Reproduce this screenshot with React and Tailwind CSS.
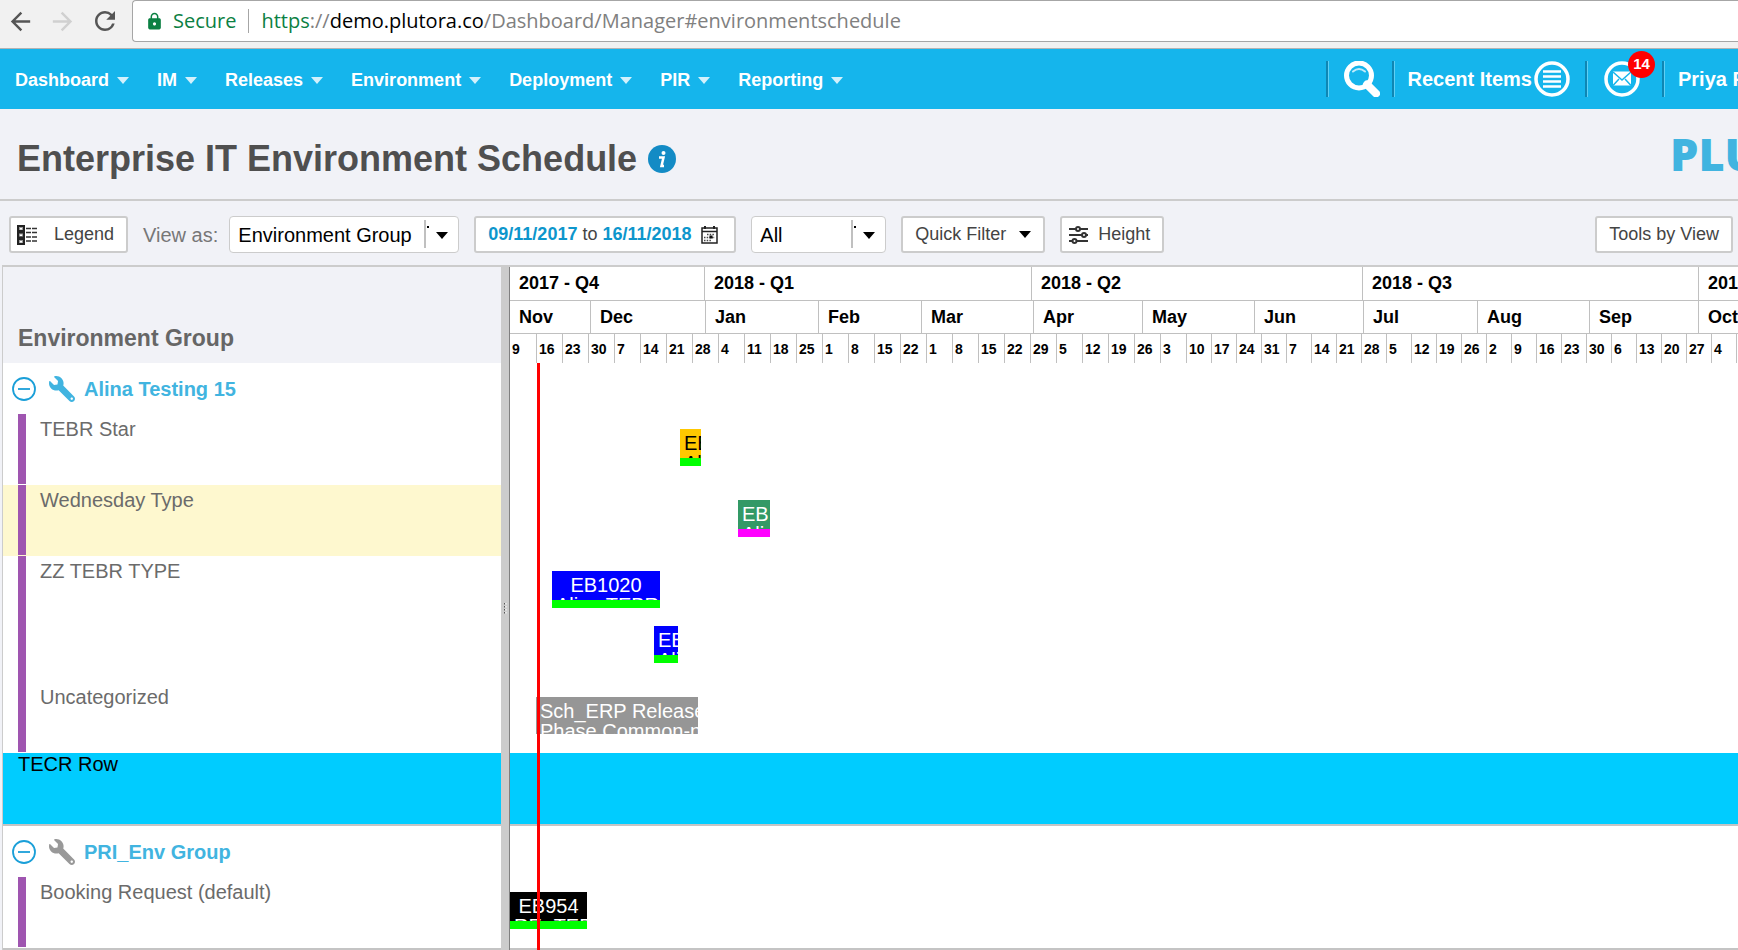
import React from "react";
import { FaWrench } from "react-icons/fa";
import { MdArrowBack, MdArrowForward, MdRefresh, MdLock } from "react-icons/md";

const MENU = ["Dashboard", "IM", "Releases", "Environment", "Deployment", "PIR", "Reporting"];

const QUARTERS = [
  ["2017 - Q4", 195],
  ["2018 - Q1", 327],
  ["2018 - Q2", 331],
  ["2018 - Q3", 336],
  ["2018 - Q4", 336],
];

const MONTHS = [
  ["Nov", 81],
  ["Dec", 115],
  ["Jan", 113],
  ["Feb", 103],
  ["Mar", 112],
  ["Apr", 109],
  ["May", 112],
  ["Jun", 109],
  ["Jul", 114],
  ["Aug", 112],
  ["Sep", 109],
  ["Oct", 112],
];

const WEEKS = [
  9, 16, 23, 30, 7, 14, 21, 28, 4, 11, 18, 25, 1, 8, 15, 22, 1, 8, 15, 22, 29, 5, 12, 19, 26, 3,
  10, 17, 24, 31, 7, 14, 21, 28, 5, 12, 19, 26, 2, 9, 16, 23, 30, 6, 13, 20, 27, 4,
];
const weekWidth = (i) => (i === 0 ? 27 : i <= 25 ? 26 : 25);

const ROWS = [
  { kind: "group", name: "Alina Testing 15", wrench: "text-[#41b4e0]" },
  {
    kind: "item",
    name: "TEBR Star",
    bars: [{ left: 170, width: 21, top: 15, title: "EB", sub: "Alina", box: "bg-[#ffc800] text-black", strip: "bg-[#00ff00]" }],
  },
  {
    kind: "item",
    name: "Wednesday Type",
    highlight: true,
    bars: [{ left: 228, width: 32, top: 15, title: "EB", sub: "Alina", box: "bg-[#339966] text-white", strip: "bg-[#ff00ff]" }],
  },
  {
    kind: "item",
    name: "ZZ TEBR TYPE",
    tall: true,
    bars: [
      { left: 42, width: 108, top: 15, title: "EB1020", sub: "Alina TEBR", box: "bg-[#0000ff] text-white", strip: "bg-[#00ff00]" },
      { left: 144, width: 24, top: 70, title: "EB", sub: "Alina", box: "bg-[#0000ff] text-white", strip: "bg-[#00ff00]" },
    ],
  },
  {
    kind: "item",
    name: "Uncategorized",
    bars: [{ left: 26, width: 162, top: 15, title: "Sch_ERP Release", sub: "Phase Common-n", box: "bg-[#969696] text-white" }],
  },
  { kind: "tecr", name: "TECR Row" },
  { kind: "group", name: "PRI_Env Group", wrench: "text-[#999999]" },
  {
    kind: "item",
    name: "Booking Request (default)",
    last: true,
    bars: [{ left: 0, width: 77, top: 15, title: "EB954", sub: "RE- TEBR", box: "bg-black text-white", strip: "bg-[#00ff00]" }],
  },
];

function rowHeight(row) {
  if (row.kind === "group") return "h-[51px]";
  if (row.kind === "tecr") return "h-[73px] border-b-2 border-[#c4c4c4] bg-[#00ccff]";
  if (row.tall) return "h-[126px]";
  if (row.last) return "h-[73px] border-b-2 border-[#c4c4c4]";
  return "h-[71px]";
}

function Caret({ className }) {
  return (
    <svg viewBox="0 0 12 7" className={`h-[7px] w-3 shrink-0 ${className}`} aria-hidden="true">
      <path d="M0 0h12L6 7z" fill="currentColor" />
    </svg>
  );
}

function BrowserBar() {
  return (
    <div className="flex h-[49px] items-start border-b border-[#b3b3b3] bg-[#f1f1f1] pl-[6px]">
      <div className="flex h-[42px] w-[126px] shrink-0 items-center gap-[13px]">
        <button type="button" aria-label="Back" className="text-[#555555]"><MdArrowBack size={29} /></button>
        <button type="button" aria-label="Forward" className="text-[#d0d0d0]"><MdArrowForward size={29} /></button>
        <button type="button" aria-label="Reload" className="text-[#555555]"><MdRefresh size={30} /></button>
      </div>
      <div className="flex h-[42px] flex-1 items-center rounded-l border border-r-0 border-[#a6a6a6] bg-white pl-3 font-['Open_Sans',sans-serif] text-[20px] whitespace-nowrap">
        <MdLock size={19} className="mr-[9px] text-[#0b8043]" />
        <span className="text-[#0b8043]">Secure</span>
        <span className="mx-3 h-6 w-px bg-[#a6a6a6]" />
        <span className="text-[#808080]">
          <span className="text-[#0b8043]">https</span>://<span className="text-black">demo.plutora.co</span>
          /Dashboard/Manager#environmentschedule
        </span>
      </div>
    </div>
  );
}

function Divider() {
  return <span className="h-9 w-[3px] shrink-0 border-r border-l-2 border-r-[#5fd0f5] border-l-[#0f86b3]" />;
}

function NavBar() {
  return (
    <nav className="flex h-[60px] items-center bg-[#15b5ec] pl-[15px] font-bold text-white">
      <ul className="flex items-center gap-7 pt-[2px] text-[18px]">
        {MENU.map((item) => (
          <li key={item}>
            <button type="button" className="flex items-center gap-2 font-bold">
              {item}
              <Caret className="text-[#d3f1fc]" />
            </button>
          </li>
        ))}
      </ul>
      <div className="ml-auto flex shrink-0 items-center text-[20px]">
        <Divider />
        <button type="button" aria-label="Search" className="mr-3 ml-[14px]">
          <svg viewBox="0 0 37 36" className="h-9 w-[37px]">
            <path d="M24 23.500l9 9" stroke="#fff" strokeWidth="8" strokeLinecap="round" />
            <circle cx="16" cy="14.500" r="12.500" fill="none" stroke="#fff" strokeWidth="5" />
            <path d="M10 10.500q6-5 12 0" fill="none" stroke="#bfeafa" strokeWidth="2" strokeLinecap="round" />
          </svg>
        </button>
        <Divider />
        <button type="button" className="mr-[15px] ml-[13px] flex items-center gap-[2px] font-bold">
          Recent Items
          <svg viewBox="0 0 36 36" className="size-9">
            <circle cx="18" cy="18" r="16" fill="none" stroke="#fff" strokeWidth="3.500" />
            <path d="M9 10.500h18M9 15.500h18M9 20.500h18M9 25.500h18" stroke="#fff" strokeWidth="2.500" />
          </svg>
        </button>
        <Divider />
        <button type="button" aria-label="Messages" className="relative mr-[22px] ml-4">
          <svg viewBox="0 0 36 36" className="size-9">
            <circle cx="18" cy="18" r="16" fill="none" stroke="#fff" strokeWidth="3.500" />
            <rect x="9" y="10.500" width="18" height="14" fill="#fff" />
            <path d="M9 11l9 8 9-8M9 24.500l6-6.500M27 24.500l-6-6.500" fill="none" stroke="#15b5ec" strokeWidth="1.500" />
          </svg>
          <span className="absolute -top-[10px] left-6 flex size-[27px] items-center justify-center rounded-full bg-[#ff0000] text-[15px]">14</span>
        </button>
        <Divider />
        <button type="button" className="ml-[13px] w-[60px] overflow-hidden text-left font-bold whitespace-nowrap">Priya R</button>
      </div>
    </nav>
  );
}

function TitleBar() {
  return (
    <header className="flex h-[92px] items-center border-b-2 border-[#cccccc] pl-[17px]">
      <div className="flex items-center gap-[11px] pt-[10px]">
        <h1 className="text-[36px] font-bold text-[#4f4f4f]">Enterprise IT Environment Schedule</h1>
        <button type="button" aria-label="Information">
          <svg viewBox="0 0 28 28" className="size-7">
            <circle cx="14" cy="14" r="14" fill="#138bc5" />
            <circle cx="15.500" cy="8" r="2" fill="#fff" />
            <path d="M11 12.500h4.500l-2 8.500h2.500" fill="none" stroke="#fff" strokeWidth="2.500" />
          </svg>
        </button>
      </div>
      <div className="ml-auto w-[68px] overflow-hidden font-['Open_Sans',sans-serif] text-[45px] leading-[60px] font-extrabold whitespace-nowrap text-[#41b4e0]">PLUTORA</div>
    </header>
  );
}

function Picker({ id, label, value, className }) {
  return (
    <div className={`relative h-[37px] ${className}`}>
      <select id={id} aria-label={label} className="size-full appearance-none rounded-sm border border-[#cccccc] bg-white pl-2 text-[20px] text-black">
        <option>{value}</option>
      </select>
      <svg viewBox="0 0 24 28" className="pointer-events-none absolute top-1 right-[11px] h-7 w-6" aria-hidden="true">
        <path d="M1 0v28" stroke="#c0c0c0" strokeWidth="2" />
        <path d="M3 6h2v2H3z" fill="#000" />
        <path d="M12 12h12l-6 7z" fill="#000" />
      </svg>
    </div>
  );
}

const BUTTON = "flex h-[37px] items-center rounded-[3px] border-2 border-[#cccccc] bg-white text-[18px] text-[#444444] whitespace-nowrap";

function Toolbar() {
  return (
    <div className="flex h-16 items-start gap-[15px] pt-[15px] pr-[5px] pl-[9px]">
      <button type="button" className={`${BUTTON} gap-[17px] pr-3 pl-[6px]`}>
        <svg viewBox="0 0 20 20" className="size-5">
          <path d="M0 0h8v20H0z" fill="#222" />
          <path d="M2 2h4v3H2zM2 8.500h4v3H2zM2 15h4v3H2z" fill="#999" />
          <path d="M3 3h2v1.500H3zM3 9.500h2V11H3zM3 16h2v1.500H3z" fill="#fff" />
          <path d="M9 3.500h11M9 7.500h11M9 12h11M9 16h11" stroke="#333" strokeWidth="1.500" strokeDasharray="5 1" />
        </svg>
        Legend
      </button>
      <div className="flex items-center gap-[11px]">
        <label htmlFor="view-as" className="text-[20px] text-[#777777]">View as:</label>
        <Picker id="view-as" value="Environment Group" className="w-[230px]" />
      </div>
      <button type="button" className={`${BUTTON} w-[262px] gap-[5px] px-3`}>
        <span className="font-bold text-[#0d96cc]">09/11/2017</span>
        to
        <span className="font-bold text-[#0d96cc]">16/11/2018</span>
        <svg viewBox="0 0 17 18" className="ml-1 h-[18px] w-[17px]">
          <path d="M1 2h15v15H1z" fill="#fff" stroke="#222" strokeWidth="1.500" />
          <path d="M1 5.500h15" stroke="#222" strokeWidth="1.500" />
          <path d="M4 0v3M13 0v3" stroke="#222" strokeWidth="2" />
          <path d="M6 8.500h8M3 11.500h11M3 14.500h8" stroke="#444" strokeWidth="1.500" strokeDasharray="1.500 1.200" />
          <path d="M8.500 9.500h3v3h-3z" fill="#111" />
        </svg>
      </button>
      <Picker id="scope" label="Scope" value="All" className="w-[135px]" />
      <button type="button" className={`${BUTTON} gap-[13px] px-3`}>
        Quick Filter
        <Caret className="text-black" />
      </button>
      <button type="button" className={`${BUTTON} gap-[10px] pr-3 pl-[7px]`}>
        <svg viewBox="0 0 19 18" className="h-[18px] w-[19px]" fill="#fff" stroke="#333" strokeWidth="2">
          <path d="M0 3h19M0 9h19M0 15h19" />
          <circle cx="9" cy="3" r="2" />
          <circle cx="15" cy="9" r="2" />
          <circle cx="5.500" cy="15" r="2" />
        </svg>
        Height
      </button>
      <button type="button" className={`${BUTTON} ml-auto px-3`}>Tools by View</button>
    </div>
  );
}

function RowLabel({ row }) {
  if (row.kind === "group") {
    return (
      <div className={`flex items-center pl-[9px] ${rowHeight(row)}`}>
        <button type="button" aria-label={`Collapse ${row.name}`}>
          <svg viewBox="0 0 24 24" className="size-6" fill="none" stroke="#1a9fd8" strokeWidth="1.800">
            <circle cx="12" cy="12" r="11" />
            <path d="M6 12h12" />
          </svg>
        </button>
        <FaWrench size={26} className={`mr-[9px] ml-[13px] -scale-x-100 ${row.wrench}`} />
        <a href="#group" className="text-[20px] font-bold text-[#41b4e0]">{row.name}</a>
      </div>
    );
  }
  if (row.kind === "tecr") {
    return <div className={`pl-[15px] text-[20px] leading-[22px] text-black ${rowHeight(row)}`}>{row.name}</div>;
  }
  return (
    <div className={`flex pl-[15px] ${rowHeight(row)} ${row.highlight ? "bg-[#fef8cf]" : ""}`}>
      <span className={`w-2 shrink-0 bg-[#9f55b0] ${row.tall ? "" : "mb-px"}`} />
      <span className="pt-1 pl-[14px] text-[20px] leading-[22px] text-[#6b6b6b]">{row.name}</span>
    </div>
  );
}

function Bar({ bar }) {
  return (
    <div
      className={`absolute flex h-[37px] flex-col overflow-hidden text-center text-[20px] leading-5 whitespace-nowrap ${bar.box}`}
      style={{ left: bar.left, width: bar.width, top: bar.top }}
    >
      <div className="min-h-0 flex-1 overflow-hidden px-1 pt-1">
        <div>{bar.title}</div>
        <div>{bar.sub}</div>
      </div>
      {bar.strip && <div className={`h-2 shrink-0 ${bar.strip}`} />}
    </div>
  );
}

function Schedule() {
  return (
    <main className="ml-[2px] flex border-t-2 border-l border-[#cccccc] bg-white">
      <section className="w-[498px] shrink-0">
        <h2 className="flex h-24 items-end bg-[#f1f2f7] pb-2 pl-[15px] text-[23px] leading-[34px] font-bold text-[#666666]">Environment Group</h2>
        {ROWS.map((row) => (
          <RowLabel key={row.name} row={row} />
        ))}
      </section>
      <div className="flex w-[9px] shrink-0 items-center border-r border-[#808080] bg-[#cccccc]">
        <svg viewBox="0 0 8 12" className="h-3 w-2" aria-hidden="true">
          <path d="M3.500 0v12" stroke="#555" strokeWidth="1" strokeDasharray="1.500 1.500" />
          <path d="M5 0v12" stroke="#fff" strokeWidth="1" strokeDasharray="1.500 1.500" />
        </svg>
      </div>
      <section className="min-w-0 flex-1 overflow-hidden">
        <div className="flex h-[34px] border-b border-[#c0c0c0] text-[18px] font-bold text-black">
          {QUARTERS.map(([name, width]) => (
            <div key={name} className="flex shrink-0 items-center border-r border-[#c0c0c0] pl-[9px]" style={{ width }}>{name}</div>
          ))}
        </div>
        <div className="flex h-[33px] border-b border-[#c0c0c0] text-[18px] font-bold text-black">
          {MONTHS.map(([name, width]) => (
            <div key={name} className="flex shrink-0 items-center border-r border-[#c0c0c0] pl-[9px]" style={{ width }}>{name}</div>
          ))}
        </div>
        <div className="flex h-[29px] text-[14px] font-bold text-black">
          {WEEKS.map((day, i) => (
            <div key={i} className="flex shrink-0 items-center border-r border-[#c0c0c0] pt-[2px] pl-[2px]" style={{ width: weekWidth(i) }}>{day}</div>
          ))}
        </div>
        <div className="relative">
          {ROWS.map((row) => (
            <div key={row.name} className={`relative ${rowHeight(row)}`}>
              {(row.bars || []).map((bar) => (
                <Bar key={bar.left} bar={bar} />
              ))}
            </div>
          ))}
          <span className="absolute top-0 bottom-0 left-[27px] w-[3px] bg-[#ff0000]" />
        </div>
      </section>
    </main>
  );
}

export default function App() {
  return (
    <div className="min-h-screen overflow-hidden bg-[#f1f2f7] font-['Liberation_Sans',Arial,sans-serif]">
      <BrowserBar />
      <NavBar />
      <TitleBar />
      <Toolbar />
      <Schedule />
    </div>
  );
}
